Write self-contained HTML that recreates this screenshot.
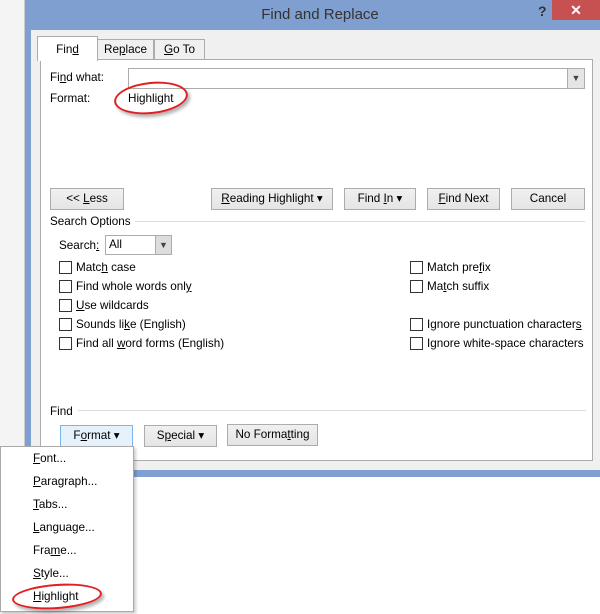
<!DOCTYPE html>
<html><head><style>
*{box-sizing:border-box}
body{margin:0;width:600px;height:614px;position:relative;overflow:hidden;background:#fff;font-family:"Liberation Sans",sans-serif;font-size:11.7px;color:#000}
.a{position:absolute}
.btn{position:absolute;height:22px;border:1px solid #acacac;background:linear-gradient(#f0f0f0,#e5e5e5);text-align:center;line-height:20px;font-size:11.7px}
.cb{position:absolute;width:13px;height:13px;border:1px solid #333;background:#fff}
u{text-decoration:underline}
</style></head><body>
<div class="a" style="left:0;top:0;width:25px;height:614px;background:#f4f4f4"></div>
<div class="a" style="left:24px;top:0;width:1px;height:470px;background:#ccc"></div>
<div class="a" style="left:25px;top:0;width:575px;height:477px;background:#7f9fd0"></div>
<div class="a" style="left:0;top:0;width:600px;height:30px;text-align:center;line-height:30px;font-size:15px;color:#333;padding-left:40px">Find and Replace</div>
<div class="a" style="left:538px;top:3px;font-size:14px;font-weight:bold;color:#333">?</div>
<div class="a" style="left:552px;top:0;width:48px;height:20px;background:#c75050;color:#fff;text-align:center;line-height:20px;font-size:14px;font-weight:bold">✕</div>
<div class="a" style="left:31px;top:30px;width:569px;height:440px;background:#f0f0f0"></div>
<div class="a" style="left:40px;top:59px;width:553px;height:402px;background:#fff;border:1px solid #acacac"></div>
<div class="a" style="left:97px;top:39px;width:57px;height:21px;border:1px solid #acacac;background:#f0f0f0;text-align:center;line-height:20px">Re<u>p</u>lace</div>
<div class="a" style="left:154px;top:39px;width:51px;height:21px;border:1px solid #acacac;background:#f0f0f0;text-align:center;line-height:20px"><u>G</u>o To</div>
<div class="a" style="left:37px;top:36px;width:61px;height:25px;border:1px solid #acacac;border-bottom:none;background:#fff;text-align:center;line-height:26px">Fin<u>d</u></div>
<div class="a" style="left:50px;top:71px">Fi<u>n</u>d what:</div>
<div class="a" style="left:50px;top:92px">Format:</div>
<div class="a" style="left:128px;top:68px;width:457px;height:21px;border:1px solid #acacac;background:#fff"></div>
<div class="a" style="left:567px;top:69px;width:17px;height:19px;background:#e5e5e5;border-left:1px solid #acacac;text-align:center;font-size:9px;line-height:19px;color:#444">▼</div>
<div class="a" style="left:128px;top:92px">Highlight</div>
<div class="a" style="left:114px;top:82px;width:74px;height:32px;border:2px solid #e02020;border-radius:50%;transform:rotate(-6deg);box-shadow:2px 3px 3px rgba(0,0,0,.3)"></div>
<div class="btn" style="left:50px;top:188px;width:74px">&lt;&lt; <u>L</u>ess</div>
<div class="btn" style="left:211px;top:188px;width:122px"><u>R</u>eading Highlight ▾</div>
<div class="btn" style="left:344px;top:188px;width:72px">Find <u>I</u>n ▾</div>
<div class="btn" style="left:427px;top:188px;width:73px"><u>F</u>ind Next</div>
<div class="btn" style="left:511px;top:188px;width:74px">Cancel</div>
<div class="a" style="left:50px;top:215px">Search Options</div>
<div class="a" style="left:135px;top:221px;width:450px;height:1px;background:#ddd"></div>
<div class="a" style="left:59px;top:239px">Search<u>:</u></div>
<div class="a" style="left:105px;top:235px;width:67px;height:20px;border:1px solid #acacac;background:#fff;padding-left:3px;line-height:18px">All</div>
<div class="a" style="left:155px;top:236px;width:16px;height:18px;background:#ddd;border-left:1px solid #acacac;text-align:center;font-size:9px;line-height:18px;color:#444">▼</div>
<div class="cb" style="left:59px;top:261px"></div><div class="a" style="left:76px;top:261px">Matc<u>h</u> case</div>
<div class="cb" style="left:59px;top:280px"></div><div class="a" style="left:76px;top:280px">Find whole words onl<u>y</u></div>
<div class="cb" style="left:59px;top:299px"></div><div class="a" style="left:76px;top:299px"><u>U</u>se wildcards</div>
<div class="cb" style="left:59px;top:318px"></div><div class="a" style="left:76px;top:318px">Sounds li<u>k</u>e (English)</div>
<div class="cb" style="left:59px;top:337px"></div><div class="a" style="left:76px;top:337px">Find all <u>w</u>ord forms (English)</div>
<div class="cb" style="left:410px;top:261px"></div><div class="a" style="left:427px;top:261px">Match pre<u>f</u>ix</div>
<div class="cb" style="left:410px;top:280px"></div><div class="a" style="left:427px;top:280px">Ma<u>t</u>ch suffix</div>
<div class="cb" style="left:410px;top:318px"></div><div class="a" style="left:427px;top:318px">Ignore punctuation character<u>s</u></div>
<div class="cb" style="left:410px;top:337px"></div><div class="a" style="left:427px;top:337px">Ignore white-space characters</div>
<div class="a" style="left:50px;top:405px">Find</div>
<div class="a" style="left:78px;top:410px;width:508px;height:1px;background:#ddd"></div>
<div class="btn" style="left:60px;top:425px;width:73px;background:#e5f1fb;border-color:#7eb4ea">F<u>o</u>rmat ▾</div>
<div class="btn" style="left:144px;top:425px;width:73px">S<u>p</u>ecial ▾</div>
<div class="btn" style="left:227px;top:424px;width:91px">No Forma<u>t</u>ting</div>
<div class="a" style="left:0;top:446px;width:134px;height:166px;background:#fff;border:1px solid #aaa;box-shadow:2px 2px 3px rgba(0,0,0,.2)"></div>
<div class="a" style="left:33px;top:452px"><u>F</u>ont...</div>
<div class="a" style="left:33px;top:475px"><u>P</u>aragraph...</div>
<div class="a" style="left:33px;top:498px"><u>T</u>abs...</div>
<div class="a" style="left:33px;top:521px"><u>L</u>anguage...</div>
<div class="a" style="left:33px;top:544px">Fra<u>m</u>e...</div>
<div class="a" style="left:33px;top:567px"><u>S</u>tyle...</div>
<div class="a" style="left:33px;top:590px"><u>H</u>ighlight</div>
<div class="a" style="left:12px;top:584px;width:90px;height:25px;border:2px solid #e02020;border-radius:50%;transform:rotate(-4deg);box-shadow:2px 3px 3px rgba(0,0,0,.3)"></div>
</body></html>
